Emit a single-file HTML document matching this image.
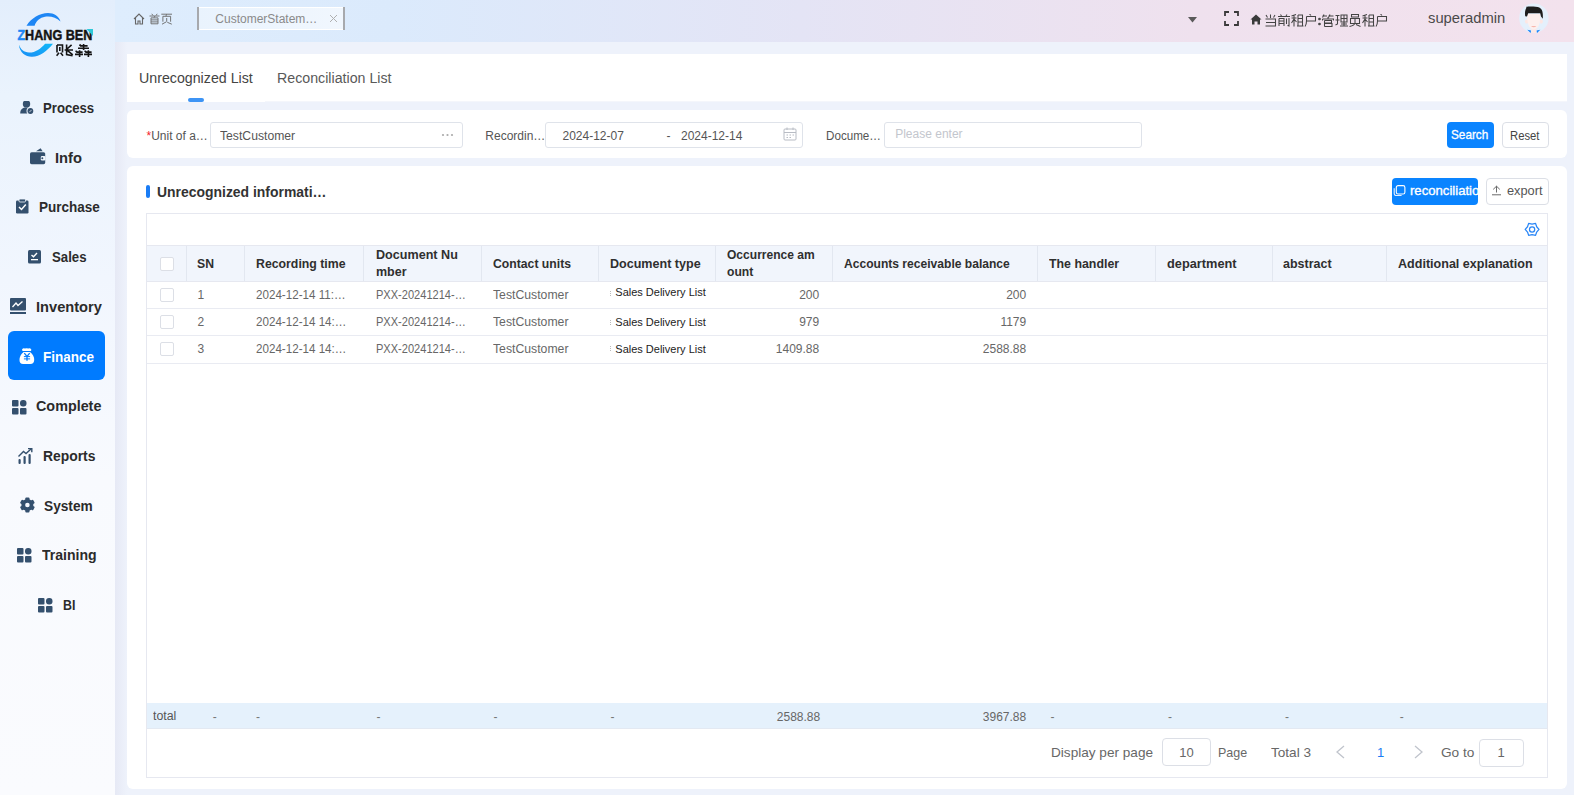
<!DOCTYPE html>
<html><head><meta charset="utf-8">
<style>
html,body{margin:0;padding:0;}
body{width:1574px;height:795px;overflow:hidden;position:relative;background:#eef2fb;font-family:"Liberation Sans",sans-serif;}
.a{position:absolute;}
.t{position:absolute;white-space:nowrap;transform-origin:0 50%;}
</style></head><body>

<div class="a" style="left:0px;top:0px;width:115px;height:795px;background:linear-gradient(180deg,#e3eefc 0%,#eaf3fd 12%,#f1f6fe 35%,#f8fafe 60%,#fafbfe 100%);"></div>
<div class="a" style="left:115px;top:0px;width:12px;height:795px;background:linear-gradient(90deg,#e6e9f5 0%,#eef2fb 100%);"></div>
<svg class="a" style="left:14px;top:10px" width="84" height="50" viewBox="0 0 84 50">
<defs><linearGradient id="lg2" x1="0" x2="1" y1="1" y2="0"><stop offset="0" stop-color="#1a8cf5"/><stop offset="1" stop-color="#10b8f8"/></linearGradient></defs>
<path d="M12.5 15.7 C 17 8, 26 3, 34 2.9 C 40 2.9, 45 6, 46.5 11.4 C 42 7.5, 37 6, 31 6.8 C 26 7.5, 22 11, 20.6 15.7 Z" fill="#1e86f4"/>
<path d="M4.9 34.6 C 5.5 43, 12 47, 18 46.8 C 26 46.6, 33 41, 39 33.7 L 31.1 33.7 C 27 38.5, 21 42.8, 15 42.6 C 10 42.4, 6.5 39.5, 4.9 34.6 Z" fill="url(#lg2)"/>
<text x="3.4" y="30.2" font-family="Liberation Sans" font-weight="bold" font-size="14.9" textLength="75" lengthAdjust="spacingAndGlyphs" fill="#141414" stroke="#141414" stroke-width="0.45"><tspan fill="#1e86f4" stroke="#1e86f4">Z</tspan>HANG BEN</text>
<path d="M72.5 19 H79 V26 Z" fill="#2ec8d8"/>
</svg>
<svg class="a" style="left:55.5px;top:43.5px" width="37" height="13.5" viewBox="0 0 37 13.5">
<g fill="none" stroke="#151515" stroke-width="1.6">
<path d="M1 1 V8.5 M1 1 H6.5 V8.5 M3.8 3 V7 M3 8.8 L0.6 11.8 M4.6 8.8 L7 11.8"/>
<path d="M10.6 0.6 V10.6 L16.6 11.8 M15.6 0.8 L11 5 M8.6 6 H17 M11.6 6.6 L16.8 10.8"/>
<path d="M24.6 0.3 L23.6 2 M24 1.9 H31.6 M22 4.3 H33 M27.6 0 V6 M20.6 6.6 L19.9 8.1 M20.3 8.1 H26.6 M19 10.4 H27 M23.6 6.3 V13 M29.6 6.6 L28.9 8.1 M29.3 8.1 H35.6 M28 10.4 H36 M32.4 6.3 V13"/>
</g></svg>
<div class="a" style="left:8px;top:331px;width:97px;height:49px;background:#007bff;border-radius:6px;"></div>
<div class="t " style="left:43.40px;top:100.95px;font-size:14px;line-height:14px;font-weight:bold;color:#2b2b2b;transform:scaleX(0.939);">Process</div>
<svg class="a" style="left:19.6px;top:100.6px" width="14" height="14" viewBox="0 0 14 14"><circle cx="6.5" cy="2.9" r="3.7" fill="#34506e"/><path d="M0.2 12.4 C0.2 8.6 2.6 6.6 6.5 6.6 C8.2 6.6 9.4 6.9 10.3 7.4 L8.8 12.4 Z" fill="#34506e"/><circle cx="10.4" cy="10" r="3.9" fill="#eef5fe"/><circle cx="10.4" cy="10" r="2.9" fill="#34506e"/><path d="M9.3 11.2 L11.6 8.9" stroke="#dfe8f3" stroke-width="0.8"/></svg>
<div class="t " style="left:55.30px;top:150.67px;font-size:14px;line-height:14px;font-weight:bold;color:#2b2b2b;transform:scaleX(1.051);">Info</div>
<svg class="a" style="left:30px;top:147.6px" width="16" height="17" viewBox="0 0 16 17"><path d="M6 3.2 L10.6 0.2 L12.6 3.2 Z" fill="#34506e"/><rect x="0" y="4.2" width="15.2" height="12" rx="1.6" fill="#34506e"/><rect x="10.8" y="7.9" width="4.6" height="4.6" rx="1.2" fill="#f2f7fe"/><circle cx="12.3" cy="10.2" r="1" fill="#34506e"/></svg>
<div class="t " style="left:38.50px;top:200.39px;font-size:14px;line-height:14px;font-weight:bold;color:#2b2b2b;transform:scaleX(0.965);">Purchase</div>
<svg class="a" style="left:15.5px;top:198.8px" width="13.5" height="16" viewBox="0 0 13.5 16"><rect x="0" y="1.5" width="12.5" height="13" rx="1.2" fill="#34506e"/><rect x="3" y="0" width="6.5" height="3" rx="1" fill="#34506e" stroke="#f3f7fe" stroke-width="0.8"/><path d="M3 8 L5.5 10.5 L9.8 5.5" fill="none" stroke="#fff" stroke-width="1.5"/></svg>
<div class="t " style="left:51.80px;top:250.11px;font-size:14px;line-height:14px;font-weight:bold;color:#2b2b2b;transform:scaleX(0.943);">Sales</div>
<svg class="a" style="left:28px;top:249.7px" width="14" height="14.5" viewBox="0 0 14 14.5"><rect x="0" y="0" width="13" height="13.5" rx="1.5" fill="#34506e"/><path d="M3.5 5 L5.5 6.8 L9 3" fill="none" stroke="#fff" stroke-width="1.4"/><rect x="3" y="9" width="7" height="1.3" fill="#fff"/></svg>
<div class="t " style="left:36.10px;top:299.83px;font-size:14px;line-height:14px;font-weight:bold;color:#2b2b2b;transform:scaleX(1.046);">Inventory</div>
<svg class="a" style="left:10.2px;top:298px" width="17" height="17" viewBox="0 0 17 17"><rect x="0" y="0" width="16" height="12.5" rx="1" fill="#34506e"/><path d="M2.5 9 L6 5 L8 7.5 L12.5 3.5" fill="none" stroke="#fff" stroke-width="1.3"/><rect x="0" y="14" width="16" height="2" fill="#34506e"/></svg>
<div class="t " style="left:43.20px;top:349.55px;font-size:14px;line-height:14px;font-weight:bold;color:#fff;transform:scaleX(0.964);">Finance</div>
<svg class="a" style="left:19px;top:347.6px" width="16" height="17" viewBox="0 0 16 17"><path d="M3.3 0.9 Q4.5 -0.1 5.9 0.6 Q7.6 -0.3 9.3 0.6 Q10.8 -0.1 12 0.9 Q12.7 2.1 11.8 3.1 L3.7 3.1 Q2.7 2.1 3.3 0.9 Z" fill="#fff"/><path d="M4.6 3.9 H11 Q15.4 7.4 15.2 12 Q15 16 11.4 16 H4.1 Q0.5 16 0.5 12 Q0.4 7.4 4.6 3.9 Z" fill="#fff"/><path d="M5.3 5.2 L8 8.4 L10.7 5.2 M8 8.4 V12.8" fill="none" stroke="#007bff" stroke-width="1.3"/><path d="M4.9 8.6 H11.1 M4.9 10.9 H11.1" fill="none" stroke="#007bff" stroke-width="1.0"/></svg>
<div class="t " style="left:36.00px;top:399.27px;font-size:14px;line-height:14px;font-weight:bold;color:#2b2b2b;transform:scaleX(1.025);">Complete</div>
<svg class="a" style="left:11.8px;top:399.5px" width="15.5" height="15.5" viewBox="0 0 15.5 15.5"><rect x="0" y="0" width="6.5" height="6.5" rx="1" fill="#34506e"/><rect x="8" y="0" width="6.5" height="6.5" rx="3" fill="#34506e"/><rect x="0" y="8" width="6.5" height="6.5" rx="1" fill="#34506e"/><rect x="8" y="8" width="6.5" height="6.5" rx="1" fill="#34506e"/></svg>
<div class="t " style="left:43.00px;top:448.99px;font-size:14px;line-height:14px;font-weight:bold;color:#2b2b2b;transform:scaleX(0.991);">Reports</div>
<svg class="a" style="left:18.3px;top:447.6px" width="15" height="17" viewBox="0 0 15 17"><rect x="0.5" y="11" width="2.2" height="5" rx="1" fill="#34506e"/><rect x="5.5" y="8" width="2.2" height="8" rx="1" fill="#34506e"/><rect x="10.5" y="6" width="2.2" height="10" rx="1" fill="#34506e"/><path d="M0.5 8.5 L5.5 3.5 L8 5.5 L13 1" fill="none" stroke="#34506e" stroke-width="1.4"/><path d="M10 0.5 H13.8 V4.3" fill="none" stroke="#34506e" stroke-width="1.4"/></svg>
<div class="t " style="left:44.20px;top:498.71px;font-size:14px;line-height:14px;font-weight:bold;color:#2b2b2b;transform:scaleX(0.978);">System</div>
<svg class="a" style="left:20px;top:497px" width="16" height="17" viewBox="0 0 16 17"><g transform="translate(7.4,8)"><circle r="6" fill="#34506e"/><rect x="-2.1" y="-7.5" width="4.2" height="4" rx="1" fill="#34506e" transform="rotate(0)"/><rect x="-2.1" y="-7.5" width="4.2" height="4" rx="1" fill="#34506e" transform="rotate(60)"/><rect x="-2.1" y="-7.5" width="4.2" height="4" rx="1" fill="#34506e" transform="rotate(120)"/><rect x="-2.1" y="-7.5" width="4.2" height="4" rx="1" fill="#34506e" transform="rotate(180)"/><rect x="-2.1" y="-7.5" width="4.2" height="4" rx="1" fill="#34506e" transform="rotate(240)"/><rect x="-2.1" y="-7.5" width="4.2" height="4" rx="1" fill="#34506e" transform="rotate(300)"/><circle r="2.3" fill="#f5f8fe"/></g></svg>
<div class="t " style="left:41.70px;top:548.43px;font-size:14px;line-height:14px;font-weight:bold;color:#2b2b2b;transform:scaleX(1.004);">Training</div>
<svg class="a" style="left:17px;top:548.2px" width="15.8" height="15.8" viewBox="0 0 15.8 15.8"><rect x="0" y="0" width="6.5" height="6.5" rx="1" fill="#34506e"/><rect x="8" y="0" width="6.5" height="6.5" rx="3" fill="#34506e"/><rect x="0" y="8" width="6.5" height="6.5" rx="1" fill="#34506e"/><rect x="8" y="8" width="6.5" height="6.5" rx="1" fill="#34506e"/></svg>
<div class="t " style="left:62.70px;top:598.15px;font-size:14px;line-height:14px;font-weight:bold;color:#2b2b2b;transform:scaleX(0.886);">BI</div>
<svg class="a" style="left:38.1px;top:598px" width="15.7" height="15.7" viewBox="0 0 15.7 15.7"><rect x="0" y="0" width="6.5" height="6.5" rx="1" fill="#34506e"/><rect x="8" y="0" width="6.5" height="6.5" rx="3" fill="#34506e"/><rect x="0" y="8" width="6.5" height="6.5" rx="1" fill="#34506e"/><rect x="8" y="8" width="6.5" height="6.5" rx="1" fill="#34506e"/></svg>
<div class="a" style="left:115px;top:0px;width:1459px;height:42px;background:linear-gradient(90deg,#deedfd 0%,#dbeafc 19%,#e4e4f5 47%,#efe1ee 74%,#f3e2ed 100%);"></div>
<svg class="a" style="left:133px;top:13px" width="12" height="12" viewBox="0 0 12 12"><path d="M1 6 L6 1 L11 6 M2.5 5 V11 H5 V8 H7 V11 H9.5 V5" fill="none" stroke="#666" stroke-width="1.1"/></svg>
<svg class="a" style="left:149px;top:13px" width="24" height="12" viewBox="0 0 24 12"><g fill="none" stroke="#6e6e6e" stroke-width="0.95"><path d="M2.8 0.8 L4 2.5 M8.2 0.8 L7 2.5 M0.5 3 H10.5 M5.9 3 L5.1 4.7 M2 4.9 H9 V10.8 H2 Z M2 6.9 H9 M2 8.9 H9"/><path d="M12.3 1.2 H23 M17.6 1.2 L16.9 3.2 M13.9 3.3 H21.6 V8.7 M13.9 3.3 V8.7 M17.7 5 V8.6 M17.4 8.8 L13 11.2 M18.3 9.3 L22.8 11.2"/></g></svg>
<div class="a" style="left:197px;top:7px;width:148px;height:23px;background:linear-gradient(90deg,#e9f3fd,#f1f7fe);box-sizing:border-box;border-top:1.5px solid #fff;border-bottom:1.5px solid #fff;"></div>
<div class="a" style="left:197px;top:7px;width:2px;height:23px;background:#a7a9ad;"></div>
<div class="a" style="left:343px;top:7px;width:2px;height:23px;background:#a7a9ad;"></div>
<div class="t " style="left:215.30px;top:12.74px;font-size:12px;line-height:12px;font-weight:normal;color:#8a8a8a;">CustomerStatem…</div>
<svg class="a" style="left:329px;top:14px" width="9" height="9" viewBox="0 0 9 9"><path d="M1 1 L8 8 M8 1 L1 8" stroke="#b0b0b0" stroke-width="1"/></svg>
<svg class="a" style="left:1187px;top:16px" width="11" height="7" viewBox="0 0 11 7"><path d="M1 1 H10 L5.5 6.5 Z" fill="#5a5a5a"/></svg>
<svg class="a" style="left:1224px;top:11px" width="15" height="15" viewBox="0 0 15 15"><path d="M1 5 V1 H5 M10 1 H14 V5 M14 10 V14 H10 M5 14 H1 V10" fill="none" stroke="#3a3a3a" stroke-width="1.8"/></svg>
<svg class="a" style="left:1250px;top:14px" width="12" height="11" viewBox="0 0 12 11"><path d="M0.5 5.5 L6 0.5 L11.5 5.5 H10 V10.5 H7.5 V7.5 H4.5 V10.5 H2 V5.5 Z" fill="#3a3a3a"/></svg>
<svg class="a" style="left:1264px;top:14px" width="126" height="13" viewBox="0 0 126 13"><g fill="none" stroke="#444" stroke-width="1.05"><path d="M2 1 L3.5 3.5 M6.5 0.5 V4 M11 1 L9.5 3.5 M1.5 5 H11.5 V12 H1.5 M2 8.5 H11.5"/><g transform="translate(13.5,0)"><path d="M3 0.5 L4 2 M9.5 0.5 L8.5 2 M0.5 2.5 H12.5 M1.5 4.5 H6.5 V12 M1.5 4.5 V12 M1.5 7 H6.5 M1.5 9.5 H6.5 M9 4.5 V10 M11.5 4 V12 L10 11.5"/></g><g transform="translate(27,0)"><path d="M5 0.5 L0.5 2 M0.5 4 H5.5 M3 1.5 V12.5 M3 5 L0.5 9 M3 5 L5.5 8 M7 1 H11.5 V11.5 M7 1 V11.5 M7 4.5 H11.5 M7 8 H11.5 M6 12 H12.5"/></g><g transform="translate(40.5,0)"><path d="M5 0 L6.5 1.5 M2 2.5 H11 V7 H2 M2 2.5 V7 Q2 10.5 0.5 12.5"/></g><g transform="translate(54,0)"><circle cx="1.5" cy="5" r="0.8" fill="#444"/><circle cx="1.5" cy="10" r="0.8" fill="#444"/></g><g transform="translate(57.5,0)"><path d="M1 2 H5.5 M2.5 0.5 L1 3.5 M7 2 H12 M8.5 0.5 L7 3.5 M6.5 3 V4.5 M1 5 H12 V6.5 M1 5 V6.5 M3 6.5 H10 V9 H3 M3 6.5 V12.5 M3 9.5 H10.5 V12.5 H3"/></g><g transform="translate(71,0)"><path d="M0.5 1.5 H4.5 M0.5 6 H4.5 M2.5 1.5 V10 L0.5 11 M6 1 H12 V8 H6 Z M6 4.5 H12 M9 1 V12 M6 10 H12 M5 12 H13"/></g><g transform="translate(84.5,0)"><path d="M3 0.5 H10 V3 H3 Z M2 4.5 H11 V9.5 H2 Z M6.5 4.5 V9 Q6 11.5 1 12.5 M7.5 10.5 L12 12.5"/></g><g transform="translate(98,0)"><path d="M5 0.5 L0.5 2 M0.5 4 H5.5 M3 1.5 V12.5 M3 5 L0.5 9 M3 5 L5.5 8 M7 1 H11.5 V11.5 M7 1 V11.5 M7 4.5 H11.5 M7 8 H11.5 M6 12 H12.5"/></g><g transform="translate(111.5,0)"><path d="M5 0 L6.5 1.5 M2 2.5 H11 V7 H2 M2 2.5 V7 Q2 10.5 0.5 12.5"/></g></g></svg>
<div class="t " style="left:1428.20px;top:10.20px;font-size:15px;line-height:15px;font-weight:normal;color:#4a4a4a;transform:scaleX(0.985);">superadmin</div>
<svg class="a" style="left:1519px;top:3px" width="30" height="30" viewBox="0 0 30 30"><circle cx="14.9" cy="15.2" r="14.7" fill="#e4f0fc"/><ellipse cx="7.6" cy="18.6" rx="1.7" ry="2.1" fill="#fde6e3"/><ellipse cx="22.2" cy="18.6" rx="1.7" ry="2.1" fill="#fde6e3"/><rect x="12.3" y="25" width="5" height="5" fill="#fde9e6"/><path d="M8.2 11 Q7.8 26.2 14.8 26.4 Q21.6 26.2 21.2 11 Z" fill="#fdf0ee"/><path d="M6.2 13.2 C5.6 9.5,6.3 6.5,7.4 4.8 L7.2 3.8 C10 3.3,17.5 3.4,20.3 4.4 C23.2 5.8,24.3 9.5,23.8 15.8 L22 13.6 L21.2 10.3 H9.2 L8 13.4 Z" fill="#1e1e1e"/><path d="M12 23 Q14.7 25.6 17.4 23 Z" fill="#f7b8ae"/><path d="M8.3 26.8 L12 27.4 L11.6 30 Z M21.3 26.8 L17.6 27.4 L18 30 Z" fill="#1683f9"/></svg>
<div class="a" style="left:127px;top:54px;width:1440px;height:48px;background:#fff;"></div>
<div class="t " style="left:139.20px;top:70.85px;font-size:14px;line-height:14px;font-weight:normal;color:#444;transform:scaleX(1.015);">Unrecognized List</div>
<div class="t " style="left:277.20px;top:71.15px;font-size:14px;line-height:14px;font-weight:normal;color:#595959;transform:scaleX(1.015);">Reconciliation List</div>
<div class="a" style="left:188px;top:98px;width:16px;height:4px;background:#3d94f5;border-radius:2px;"></div>
<div class="a" style="left:265px;top:101px;width:1302px;height:1px;background:#f4f6fb;"></div>
<div class="a" style="left:127px;top:110px;width:1440px;height:48px;background:#fff;border-radius:6px;"></div>
<div class="t " style="left:146.50px;top:130.04px;font-size:12px;line-height:12px;font-weight:normal;color:#555;"><span style="color:#f5222d">*</span>Unit of a…</div>
<div class="a" style="left:210px;top:122px;width:253px;height:26px;box-sizing:border-box;border:1px solid #dfe3ea;border-radius:3px;background:#fff;"></div>
<div class="t " style="left:220.20px;top:130.04px;font-size:12px;line-height:12px;font-weight:normal;color:#555;transform:scaleX(1.015);">TestCustomer</div>
<svg class="a" style="left:441px;top:133px" width="14" height="4" viewBox="0 0 14 4"><circle cx="2" cy="2" r="1.1" fill="#aaa"/><circle cx="6.5" cy="2" r="1.1" fill="#aaa"/><circle cx="11" cy="2" r="1.1" fill="#aaa"/></svg>
<div class="t " style="left:485.30px;top:130.04px;font-size:12px;line-height:12px;font-weight:normal;color:#555;">Recordin…</div>
<div class="a" style="left:545px;top:122px;width:258px;height:26px;box-sizing:border-box;border:1px solid #dfe3ea;border-radius:3px;background:#fff;"></div>
<div class="t " style="left:562.50px;top:130.04px;font-size:12px;line-height:12px;font-weight:normal;color:#555;">2024-12-07</div>
<div class="t " style="left:666.50px;top:130.04px;font-size:12px;line-height:12px;font-weight:normal;color:#555;">-</div>
<div class="t " style="left:681.00px;top:130.04px;font-size:12px;line-height:12px;font-weight:normal;color:#555;">2024-12-14</div>
<svg class="a" style="left:783px;top:127px" width="14" height="14" viewBox="0 0 14 14"><rect x="1" y="2" width="12" height="11" rx="1" fill="none" stroke="#b8bcc4" stroke-width="1"/><path d="M1 5.5 H13 M4 0.5 V3 M10 0.5 V3 M3.5 8 H5 M6.5 8 H8 M9.5 8 H11 M3.5 10.5 H5 M6.5 10.5 H8" stroke="#b8bcc4" stroke-width="1"/></svg>
<div class="t " style="left:826.40px;top:130.04px;font-size:12px;line-height:12px;font-weight:normal;color:#555;transform:scaleX(0.97);">Docume…</div>
<div class="a" style="left:884px;top:122px;width:258px;height:26px;box-sizing:border-box;border:1px solid #dfe3ea;border-radius:3px;background:#fff;"></div>
<div class="t " style="left:895.20px;top:128.14px;font-size:12px;line-height:12px;font-weight:normal;color:#c3c6cd;">Please enter</div>
<div class="a" style="left:1447px;top:122px;width:47px;height:26px;background:#0a84ff;border-radius:4px;"></div>
<div class="t " style="left:1451.20px;top:127.69px;font-size:13px;line-height:13px;font-weight:normal;color:#fff;transform:scaleX(0.905);-webkit-text-stroke:0.3px #fff;">Search</div>
<div class="a" style="left:1502px;top:122px;width:47px;height:26px;box-sizing:border-box;border:1px solid #dcdfe6;border-radius:4px;background:#fff;"></div>
<div class="t " style="left:1510.20px;top:129.84px;font-size:12px;line-height:12px;font-weight:normal;color:#444;transform:scaleX(0.94);">Reset</div>
<div class="a" style="left:127px;top:166px;width:1440px;height:623px;background:#fff;border-radius:6px;"></div>
<div class="a" style="left:146px;top:185px;width:4px;height:13px;background:#1a7cf5;border-radius:2px;"></div>
<div class="t " style="left:157.20px;top:185.35px;font-size:14px;line-height:14px;font-weight:bold;color:#333;transform:scaleX(0.995);">Unrecognized informati…</div>
<div class="a" style="left:1392px;top:178px;width:86px;height:27px;background:#0a84ff;border-radius:4px;overflow:hidden;"></div>
<svg class="a" style="left:1393px;top:184px" width="13" height="12" viewBox="0 0 13 12"><rect x="3.3" y="1.6" width="8.6" height="8.4" rx="1.8" fill="none" stroke="#fff" stroke-width="1.1"/><path d="M1.2 4.2 V9.6 Q1.2 11.5 3 11.5 H8.6" fill="none" stroke="#e6f0ff" stroke-width="1.1"/></svg>
<div class="a" style="left:1392px;top:178px;width:86px;height:27px;overflow:hidden;"><div class="t" style="left:17.5px;top:6.19px;font-size:13px;line-height:13px;font-weight:normal;color:#fff;-webkit-text-stroke:0.35px #fff;transform:scaleX(1.01);">reconciliation</div></div>
<div class="a" style="left:1486px;top:178px;width:63px;height:27px;box-sizing:border-box;border:1px solid #dcdfe6;border-radius:4px;background:#fff;"></div>
<svg class="a" style="left:1491px;top:185px" width="11" height="11" viewBox="0 0 11 11"><path d="M1 9.8 H10 M5.5 7.5 V1.2 M2.2 4.4 L5.5 1.2 L8.8 4.4" fill="none" stroke="#5a5a5a" stroke-width="0.9"/></svg>
<div class="t " style="left:1507.40px;top:185.04px;font-size:12px;line-height:12px;font-weight:normal;color:#555;transform:scaleX(1.065);">export</div>
<div class="a" style="left:146px;top:213px;width:1402px;height:565px;box-sizing:border-box;border:1px solid #e6e8f0;background:#fff;"></div>
<svg class="a" style="left:1523px;top:221px" width="18" height="17" viewBox="0 0 18 17"><g transform="translate(9.1,8.4)"><path d="M6.90 0.00 L4.59 2.65 L3.45 5.98 L0.00 5.30 L-3.45 5.98 L-4.59 2.65 L-6.90 0.00 L-4.59 -2.65 L-3.45 -5.98 L-0.00 -5.30 L3.45 -5.98 L4.59 -2.65 Z" fill="none" stroke="#2a86f6" stroke-width="1.25" stroke-linejoin="round"/><circle r="2.6" fill="none" stroke="#2a86f6" stroke-width="1.25"/></g></svg>
<div class="a" style="left:147px;top:246px;width:1400px;height:35px;background:#f1f5fc;"></div>
<div class="a" style="left:147px;top:245px;width:1400px;height:1px;background:#e6e8f0;"></div>
<div class="a" style="left:147px;top:281px;width:1400px;height:1px;background:#e6e8f0;"></div>
<div class="a" style="left:186px;top:246px;width:1px;height:35px;background:#e2e7f0;"></div>
<div class="a" style="left:244px;top:246px;width:1px;height:35px;background:#e2e7f0;"></div>
<div class="a" style="left:363px;top:246px;width:1px;height:35px;background:#e2e7f0;"></div>
<div class="a" style="left:481px;top:246px;width:1px;height:35px;background:#e2e7f0;"></div>
<div class="a" style="left:598px;top:246px;width:1px;height:35px;background:#e2e7f0;"></div>
<div class="a" style="left:715px;top:246px;width:1px;height:35px;background:#e2e7f0;"></div>
<div class="a" style="left:832px;top:246px;width:1px;height:35px;background:#e2e7f0;"></div>
<div class="a" style="left:1037px;top:246px;width:1px;height:35px;background:#e2e7f0;"></div>
<div class="a" style="left:1155px;top:246px;width:1px;height:35px;background:#e2e7f0;"></div>
<div class="a" style="left:1272px;top:246px;width:1px;height:35px;background:#e2e7f0;"></div>
<div class="a" style="left:1386px;top:246px;width:1px;height:35px;background:#e2e7f0;"></div>
<div class="a" style="left:160px;top:257px;width:14px;height:14px;box-sizing:border-box;border:1px solid #dcdfe6;border-radius:2px;background:#fff;"></div>
<div class="t " style="left:196.90px;top:257.62px;font-size:12.5px;line-height:12.5px;font-weight:bold;color:#2f2f2f;transform:scaleX(0.977);">SN</div>
<div class="t " style="left:255.90px;top:257.62px;font-size:12.5px;line-height:12.5px;font-weight:bold;color:#2f2f2f;transform:scaleX(0.984);">Recording time</div>
<div class="t " style="left:376.00px;top:248.82px;font-size:12.5px;line-height:12.5px;font-weight:bold;color:#2f2f2f;transform:scaleX(1.007);">Document Nu</div>
<div class="t " style="left:376.00px;top:266.42px;font-size:12.5px;line-height:12.5px;font-weight:bold;color:#2f2f2f;transform:scaleX(1.0);">mber</div>
<div class="t " style="left:492.80px;top:257.62px;font-size:12.5px;line-height:12.5px;font-weight:bold;color:#2f2f2f;transform:scaleX(0.977);">Contact units</div>
<div class="t " style="left:609.60px;top:257.62px;font-size:12.5px;line-height:12.5px;font-weight:bold;color:#2f2f2f;transform:scaleX(1.004);">Document type</div>
<div class="t " style="left:726.70px;top:248.82px;font-size:12.5px;line-height:12.5px;font-weight:bold;color:#2f2f2f;transform:scaleX(0.964);">Occurrence am</div>
<div class="t " style="left:726.70px;top:266.42px;font-size:12.5px;line-height:12.5px;font-weight:bold;color:#2f2f2f;transform:scaleX(0.972);">ount</div>
<div class="t " style="left:843.50px;top:257.62px;font-size:12.5px;line-height:12.5px;font-weight:bold;color:#2f2f2f;transform:scaleX(0.966);">Accounts receivable balance</div>
<div class="t " style="left:1049.30px;top:257.62px;font-size:12.5px;line-height:12.5px;font-weight:bold;color:#2f2f2f;transform:scaleX(0.989);">The handler</div>
<div class="t " style="left:1166.60px;top:257.62px;font-size:12.5px;line-height:12.5px;font-weight:bold;color:#2f2f2f;transform:scaleX(1.022);">department</div>
<div class="t " style="left:1283.10px;top:257.62px;font-size:12.5px;line-height:12.5px;font-weight:bold;color:#2f2f2f;transform:scaleX(0.998);">abstract</div>
<div class="t " style="left:1398.10px;top:257.62px;font-size:12.5px;line-height:12.5px;font-weight:bold;color:#2f2f2f;transform:scaleX(1.004);">Additional explanation</div>
<div class="a" style="left:147px;top:308px;width:1400px;height:1px;background:#e9ebf2;"></div>
<div class="a" style="left:160px;top:288px;width:14px;height:14px;box-sizing:border-box;border:1px solid #dcdfe6;border-radius:2px;background:#fff;"></div>
<div class="t " style="left:197.60px;top:288.84px;font-size:12px;line-height:12px;font-weight:normal;color:#676767;">1</div>
<div class="t " style="left:256.00px;top:288.84px;font-size:12px;line-height:12px;font-weight:normal;color:#676767;transform:scaleX(0.968);">2024-12-14 11:…</div>
<div class="t " style="left:376.30px;top:288.84px;font-size:12px;line-height:12px;font-weight:normal;color:#676767;transform:scaleX(0.921);">PXX-20241214-…</div>
<div class="t " style="left:493.00px;top:288.84px;font-size:12px;line-height:12px;font-weight:normal;color:#676767;transform:scaleX(1.02);">TestCustomer</div>
<div class="a" style="left:610px;top:291px;width:1px;height:6px;background-image:linear-gradient(#bbb 50%,transparent 50%);background-size:1px 2px;"></div>
<div class="t " style="left:615.30px;top:287.49px;font-size:11px;line-height:11px;font-weight:normal;color:#222;">Sales Delivery List</div>
<div class="t" style="left:519.20px;width:300px;text-align:right;top:288.84px;font-size:12px;line-height:12px;font-weight:normal;color:#676767;">200</div>
<div class="t" style="left:726.20px;width:300px;text-align:right;top:288.84px;font-size:12px;line-height:12px;font-weight:normal;color:#676767;">200</div>
<div class="a" style="left:147px;top:335px;width:1400px;height:1px;background:#e9ebf2;"></div>
<div class="a" style="left:160px;top:315px;width:14px;height:14px;box-sizing:border-box;border:1px solid #dcdfe6;border-radius:2px;background:#fff;"></div>
<div class="t " style="left:197.60px;top:316.04px;font-size:12px;line-height:12px;font-weight:normal;color:#676767;">2</div>
<div class="t " style="left:256.00px;top:316.04px;font-size:12px;line-height:12px;font-weight:normal;color:#676767;transform:scaleX(0.968);">2024-12-14 14:…</div>
<div class="t " style="left:376.30px;top:316.04px;font-size:12px;line-height:12px;font-weight:normal;color:#676767;transform:scaleX(0.921);">PXX-20241214-…</div>
<div class="t " style="left:493.00px;top:316.04px;font-size:12px;line-height:12px;font-weight:normal;color:#676767;transform:scaleX(1.02);">TestCustomer</div>
<div class="a" style="left:610px;top:320px;width:1px;height:6px;background-image:linear-gradient(#bbb 50%,transparent 50%);background-size:1px 2px;"></div>
<div class="t " style="left:615.30px;top:317.39px;font-size:11px;line-height:11px;font-weight:normal;color:#222;">Sales Delivery List</div>
<div class="t" style="left:519.20px;width:300px;text-align:right;top:316.04px;font-size:12px;line-height:12px;font-weight:normal;color:#676767;">979</div>
<div class="t" style="left:726.20px;width:300px;text-align:right;top:316.04px;font-size:12px;line-height:12px;font-weight:normal;color:#676767;">1179</div>
<div class="a" style="left:147px;top:363px;width:1400px;height:1px;background:#e9ebf2;"></div>
<div class="a" style="left:160px;top:342px;width:14px;height:14px;box-sizing:border-box;border:1px solid #dcdfe6;border-radius:2px;background:#fff;"></div>
<div class="t " style="left:197.60px;top:343.24px;font-size:12px;line-height:12px;font-weight:normal;color:#676767;">3</div>
<div class="t " style="left:256.00px;top:343.24px;font-size:12px;line-height:12px;font-weight:normal;color:#676767;transform:scaleX(0.968);">2024-12-14 14:…</div>
<div class="t " style="left:376.30px;top:343.24px;font-size:12px;line-height:12px;font-weight:normal;color:#676767;transform:scaleX(0.921);">PXX-20241214-…</div>
<div class="t " style="left:493.00px;top:343.24px;font-size:12px;line-height:12px;font-weight:normal;color:#676767;transform:scaleX(1.02);">TestCustomer</div>
<div class="a" style="left:610px;top:346px;width:1px;height:6px;background-image:linear-gradient(#bbb 50%,transparent 50%);background-size:1px 2px;"></div>
<div class="t " style="left:615.30px;top:343.59px;font-size:11px;line-height:11px;font-weight:normal;color:#222;">Sales Delivery List</div>
<div class="t" style="left:519.20px;width:300px;text-align:right;top:343.24px;font-size:12px;line-height:12px;font-weight:normal;color:#676767;">1409.88</div>
<div class="t" style="left:726.20px;width:300px;text-align:right;top:343.24px;font-size:12px;line-height:12px;font-weight:normal;color:#676767;">2588.88</div>
<div class="a" style="left:147px;top:703px;width:1400px;height:26px;background:#e5f1fc;"></div>
<div class="a" style="left:147px;top:728px;width:1400px;height:1px;background:#e3e9f2;"></div>
<div class="t " style="left:153.00px;top:709.64px;font-size:12px;line-height:12px;font-weight:normal;color:#555;transform:scaleX(1.03);">total</div>
<div class="t " style="left:212.80px;top:710.64px;font-size:12px;line-height:12px;font-weight:normal;color:#777;">-</div>
<div class="t " style="left:255.90px;top:710.64px;font-size:12px;line-height:12px;font-weight:normal;color:#777;">-</div>
<div class="t " style="left:376.40px;top:710.64px;font-size:12px;line-height:12px;font-weight:normal;color:#777;">-</div>
<div class="t " style="left:493.40px;top:710.64px;font-size:12px;line-height:12px;font-weight:normal;color:#777;">-</div>
<div class="t " style="left:610.40px;top:710.64px;font-size:12px;line-height:12px;font-weight:normal;color:#777;">-</div>
<div class="t " style="left:1050.40px;top:710.64px;font-size:12px;line-height:12px;font-weight:normal;color:#777;">-</div>
<div class="t " style="left:1167.90px;top:710.64px;font-size:12px;line-height:12px;font-weight:normal;color:#777;">-</div>
<div class="t " style="left:1285.00px;top:710.64px;font-size:12px;line-height:12px;font-weight:normal;color:#777;">-</div>
<div class="t " style="left:1399.80px;top:710.64px;font-size:12px;line-height:12px;font-weight:normal;color:#777;">-</div>
<div class="t" style="left:520.20px;width:300px;text-align:right;top:710.64px;font-size:12px;line-height:12px;font-weight:normal;color:#676767;">2588.88</div>
<div class="t" style="left:726.20px;width:300px;text-align:right;top:710.64px;font-size:12px;line-height:12px;font-weight:normal;color:#676767;">3967.88</div>
<div class="t " style="left:1051.30px;top:746.29px;font-size:13px;line-height:13px;font-weight:normal;color:#676767;transform:scaleX(1.046);">Display per page</div>
<div class="a" style="left:1162px;top:738px;width:49px;height:28px;box-sizing:border-box;border:1px solid #dcdfe6;border-radius:4px;background:#fff;"></div>
<div class="t " style="left:1179.30px;top:746.29px;font-size:13px;line-height:13px;font-weight:normal;color:#676767;">10</div>
<div class="t " style="left:1218.40px;top:746.29px;font-size:13px;line-height:13px;font-weight:normal;color:#676767;transform:scaleX(0.96);">Page</div>
<div class="t " style="left:1270.90px;top:745.69px;font-size:13px;line-height:13px;font-weight:normal;color:#676767;transform:scaleX(1.045);">Total 3</div>
<svg class="a" style="left:1334px;top:745px" width="12" height="14" viewBox="0 0 12 14"><path d="M10 1 L3 7 L10 13" fill="none" stroke="#c0c4cc" stroke-width="1.3"/></svg>
<div class="t " style="left:1377.00px;top:746.29px;font-size:13px;line-height:13px;font-weight:normal;color:#1a7cf5;">1</div>
<svg class="a" style="left:1413px;top:745px" width="12" height="14" viewBox="0 0 12 14"><path d="M2 1 L9 7 L2 13" fill="none" stroke="#c0c4cc" stroke-width="1.3"/></svg>
<div class="t " style="left:1440.50px;top:745.69px;font-size:13px;line-height:13px;font-weight:normal;color:#676767;transform:scaleX(1.05);">Go to</div>
<div class="a" style="left:1479px;top:739px;width:45px;height:28px;box-sizing:border-box;border:1px solid #dcdfe6;border-radius:4px;background:#fff;"></div>
<div class="t " style="left:1497.50px;top:746.29px;font-size:13px;line-height:13px;font-weight:normal;color:#676767;">1</div>
</body></html>
